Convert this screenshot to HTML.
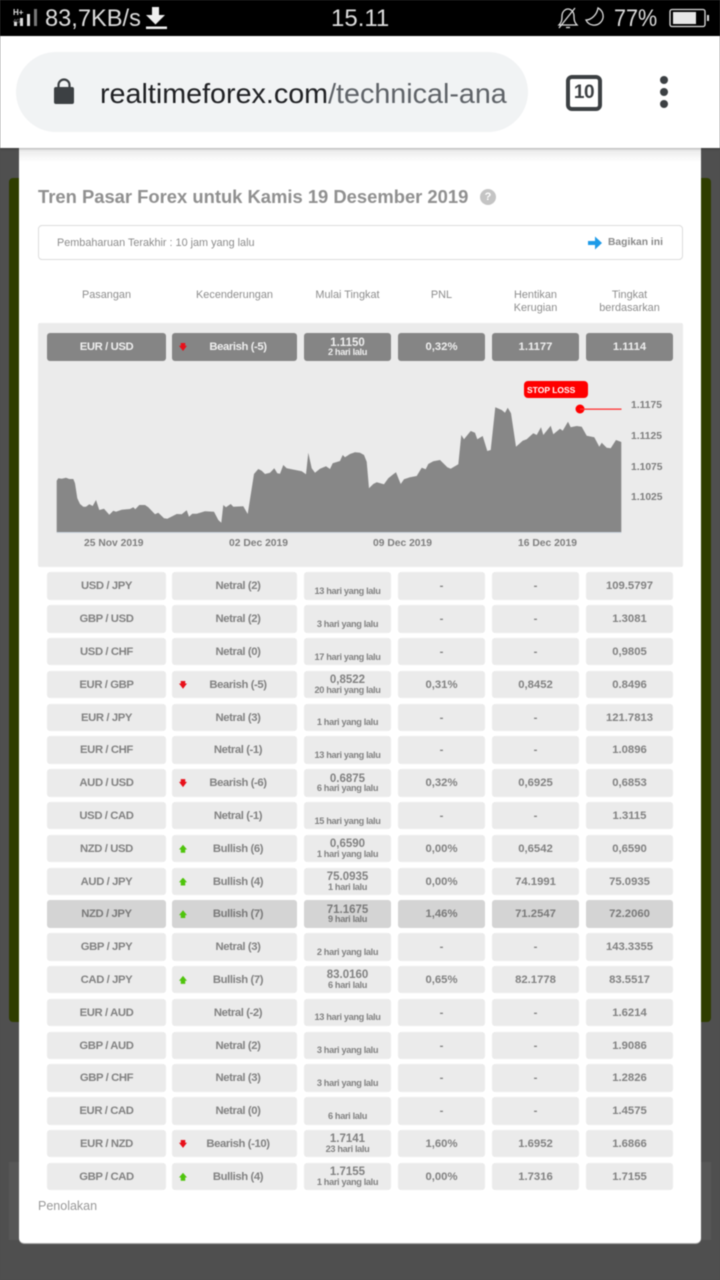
<!DOCTYPE html>
<html><head><meta charset="utf-8"><style>
html,body{margin:0;padding:0}
body{width:720px;height:1280px;position:relative;overflow:hidden;background:#4f4f4f;font-family:"Liberation Sans",sans-serif}
.a{position:absolute}
.t{position:absolute;white-space:nowrap}
#page{position:absolute;left:0;top:0;width:720px;height:1280px;filter:blur(.4px)}
.r{position:absolute;left:0;width:720px;height:28px}
.r>div{position:absolute;top:0;height:27.6px;line-height:29.800px;background:#ebebeb;border-radius:3px;text-align:center;color:#828282;font-size:11.3px;font-weight:bold;white-space:nowrap;overflow:hidden}
.r>div:nth-child(1){left:47px;width:119px;letter-spacing:-.4px}
.r>div:nth-child(2){left:172px;width:118px;padding-left:7px;letter-spacing:-.4px}
.r>div:nth-child(3){left:304px;width:87px}
.r>div:nth-child(4){left:398px;width:87px}
.r>div:nth-child(5){left:492px;width:87px}
.r>div:nth-child(6){left:586px;width:87px}
.r b{position:absolute;left:0;right:0;top:4.500px;line-height:11px;font-size:11.5px;font-weight:bold}
.r i{position:absolute;left:0;right:0;top:14px;line-height:10px;font-size:9.2px;font-style:normal;font-weight:bold;letter-spacing:-.35px}
.r u{position:absolute;left:0;right:0;top:12.800px;line-height:12px;font-size:9.2px;text-decoration:none;letter-spacing:-.35px}
.h>div{background:#858585;color:#eee}
.g>div{background:#d4d4d4;color:#7a7a7a}
.dn,.up{position:absolute;left:7px;top:10px;width:8px;height:8px}
.dn{background:#e8101a;clip-path:polygon(22% 0,78% 0,78% 35%,100% 35%,50% 100%,0 35%,22% 35%)}
.up{background:#4fc40c;clip-path:polygon(50% 0,100% 60%,78% 60%,78% 100%,22% 100%,22% 60%,0 60%)}
.hd{position:absolute;text-align:center;color:#8e8e8e;font-size:10.900px;line-height:13px;top:288.500px}
.ax{position:absolute;color:#7f7f7f;font-size:10.3px;font-weight:bold;white-space:nowrap;line-height:12px}
</style></head><body><div id="page">

<div class="a" style="left:0;top:36px;width:720px;height:1244px;background:#4f4f4f"></div>
<div class="a" style="left:9px;top:178px;width:702px;height:844px;background:#2f3d00;border-radius:4px"></div>
<div class="a" style="left:9px;top:1162px;width:702px;height:78px;background:#575757"></div>
<div class="a" style="left:19px;top:148px;width:682px;height:1095px;background:#fff;border-radius:0 0 5px 5px;box-shadow:0 1px 0 #aaa"></div>
<div class="a" style="left:19px;top:148px;width:682px;height:14px;background:linear-gradient(#e8e8e8,#fff)"></div>

<div class="a" style="left:0;top:0;width:720px;height:36px;background:#000"></div>
<svg class="a" style="left:0;top:0" width="180" height="36" viewBox="0 0 180 36">
<text x="13" y="15" font-size="8" font-weight="bold" fill="#ddd" font-family="Liberation Sans">H+</text>
<text x="13" y="23" font-size="5.5" fill="#888" font-family="Liberation Sans">4G</text>
<rect x="14" y="22" width="3" height="4" fill="#ddd"/><rect x="20" y="18" width="3" height="8" fill="#ddd"/><rect x="27" y="14" width="3" height="12" fill="#ddd"/><rect x="34" y="9" width="3" height="17" fill="#777"/>
<path d="M152 7h7v8h6l-9.500 9.500L146 15h6z" fill="#eee"/><rect x="146" y="26.500" width="21" height="2.500" fill="#eee"/>
</svg>
<div class="t" style="left:45px;top:4px;font-size:24px;line-height:30px;color:#dcdcdc;transform-origin:0 0;transform:scaleX(.985)">83,7KB/s</div>
<div class="t" style="left:331px;top:4px;font-size:24px;line-height:30px;color:#dcdcdc">15.11</div>
<div class="t" style="left:614px;top:4px;font-size:24px;line-height:30px;color:#dcdcdc;transform-origin:0 0;transform:scaleX(.9)">77%</div>
<svg class="a" style="left:540px;top:0" width="180" height="36" viewBox="0 0 180 36" fill="none" stroke="#ddd" stroke-width="1.300">
<path d="M19 25c3-3 3-6 3-9 0-4 3-7 6-7s6 3 6 7c0 3 0 6 3 9z"/><path d="M19 28L35 8"/><path d="M26 27.500h4"/>
<path d="M58 8a9 9 0 1 1-12 12c5 0 11-5 12-12z"/>
<rect x="130" y="9.500" width="35" height="17" rx="2"/><rect x="133" y="12" width="23" height="12" fill="#e6e6e6" stroke="none"/><rect x="167" y="15" width="2" height="6" fill="#ddd" stroke="none"/>
</svg>

<div class="a" style="left:0;top:36px;width:720px;height:112px;background:#fff;box-shadow:0 1px 2px rgba(0,0,0,.25)"></div>
<div class="a" style="left:16px;top:52px;width:512px;height:80px;background:#f1f3f4;border-radius:40px"></div>
<svg class="a" style="left:50px;top:76px" width="28" height="32" viewBox="0 0 28 32"><path d="M6 11h16a2 2 0 0 1 2 2v13a2 2 0 0 1-2 2H6a2 2 0 0 1-2-2V13a2 2 0 0 1 2-2z" fill="#3c4043"/><path d="M8.500 12V9a5.500 5.500 0 0 1 11 0v3" fill="none" stroke="#3c4043" stroke-width="2.200"/></svg>
<div class="t" style="left:100px;top:75px;font-size:28px;line-height:38px;color:#202124;transform-origin:0 0;transform:scaleX(1.025)">realtimeforex.com<span style="color:#5f6368">/technical-ana</span></div>
<div class="a" style="left:566px;top:75px;width:28px;height:28px;border:4px solid #3c4043;border-radius:6px;text-align:center;line-height:28px;font-size:19px;font-weight:bold;color:#3c4043;letter-spacing:-.5px">10</div>
<div class="a" style="left:660px;top:76px;width:8px;height:8px;border-radius:50%;background:#3c4043"></div>
<div class="a" style="left:660px;top:88px;width:8px;height:8px;border-radius:50%;background:#3c4043"></div>
<div class="a" style="left:660px;top:100px;width:8px;height:8px;border-radius:50%;background:#3c4043"></div>

<div class="t" style="left:38px;top:184px;font-size:18.400px;line-height:25px;font-weight:bold;color:#909090">Tren Pasar Forex untuk Kamis 19 Desember 2019</div>
<div class="a" style="left:480px;top:189px;width:16px;height:16px;border-radius:50%;background:#c4c4c4;color:#fff;font-size:11px;font-weight:bold;line-height:16px;text-align:center">?</div>

<div class="a" style="left:38px;top:225px;width:643px;height:33px;border:1px solid #dcdcdc;border-radius:4px;background:#fff"></div>
<div class="t" style="left:57px;top:235.500px;font-size:10.850px;line-height:14px;color:#8c8c8c">Pembaharuan Terakhir : 10 jam yang lalu</div>
<svg class="a" style="left:587px;top:235px" width="16" height="16" viewBox="0 0 16 16"><path d="M1 6h7V1.500L15 8l-7 6.500V10H1z" fill="#1e9be8"/></svg>
<div class="t" style="left:608px;top:235.500px;font-size:10.300px;line-height:14px;font-weight:bold;color:#8a8a8a">Bagikan ini</div>

<div class="hd" style="left:47px;width:119px">Pasangan</div>
<div class="hd" style="left:172px;width:125px">Kecenderungan</div>
<div class="hd" style="left:304px;width:87px">Mulai Tingkat</div>
<div class="hd" style="left:398px;width:87px">PNL</div>
<div class="hd" style="left:492px;width:87px">Hentikan<br>Kerugian</div>
<div class="hd" style="left:586px;width:87px">Tingkat<br>berdasarkan</div>

<div class="a" style="left:38px;top:323px;width:645px;height:244px;background:#ebebeb;border-radius:2px"></div>

<div class="r h" style="top:333px"><div>EUR / USD</div><div><span class="dn"></span>Bearish (-5)</div><div><b>1.1150</b><i>2 hari lalu</i></div><div>0,32%</div><div>1.1177</div><div>1.1114</div></div>

<svg class="a" style="left:0;top:0" width="720" height="580" viewBox="0 0 720 580">
<path fill="#878787" d="M56.700 532.300V480.700L58.300 478.300 61.700 478.700 66 477.700 69.300 479 73.300 479 75 483.300 77.300 498.300 80 504 83.300 506.700 86 506.700 89.300 504.300 92.700 506 96 500 99.300 510 104 508.700 109.300 514.700 113.300 510.700 116 511.700 121.700 509.700 130 509 133.300 507.300 135.300 509.300 139.300 505 145 505 148.300 507.300 155 514.300 158.300 512.700 164 518.300 167.300 518.700 173.300 515.700 176.700 514 181.700 514.300 186.700 510.300 189 516.700 192.300 513.700 196.700 513.700 205 511.300 214 511.700 218.300 520 221.300 522.700 223.300 505 226 507.300 230.700 504 233.300 506.700 243.300 506.300 247.700 514 254 474 258.300 469 261.700 470.700 265 474 270 472.700 274.300 468.300 277.300 473.300 280 473.700 283.300 465 286.700 468.300 296.700 470.300 301.700 471.300 306 474.300 308.300 452.700 311.700 468.300 315 472.700 320 468.700 326 466.300 330 469 332.700 463.300 340 461 342.700 455 345 457.300 350 454 355 452.300 360 452.700 364 455 366.700 461.700 369 488.300 373.300 484 376.700 482.300 384 484.300 388.300 478.300 393.300 474.300 396 472.300 400.700 484 404 479.300 410 477.300 416.700 476 421.700 467.700 425.700 469.300 428.300 464 433.300 461.300 440 460 447.300 467.300 450.700 468.700 458.300 464.300 461.300 435 464 439.300 470.700 431 475 432.700 477.300 439.300 482.700 436 487.300 451 490.700 450 495.300 407.300 501.700 410 505 412.700 507.700 407.700 511 413.300 516 446.700 522.700 440.700 526.700 439.300 533.300 433.300 536.700 435 541 427.300 543.300 435 550.700 425.700 553.300 434.300 560 428.700 562.700 430.700 568 421.700 570.700 427.300 576.700 426 581.700 426.700 586.700 435.700 594.300 437.300 599.300 446.700 601.700 442.700 606.700 447.700 610.700 448.300 616 440 621.300 442 621.300 532.300Z"/>
<rect x="56.700" y="532" width="564.600" height="1" fill="#c9d3dc"/>
<circle cx="580" cy="409" r="4.500" fill="#f00"/><rect x="580" y="408.500" width="41.500" height="1.300" fill="#f33"/>
</svg>
<div class="a" style="left:524px;top:381px;width:64px;height:17px;background:#f00;border-radius:4px"></div>
<div class="t" style="left:527px;top:384.500px;font-size:8.500px;line-height:11px;font-weight:bold;color:#fff">STOP LOSS</div>
<div class="ax" style="left:631px;top:400px">1.1175</div>
<div class="ax" style="left:631px;top:431px">1.1125</div>
<div class="ax" style="left:631px;top:462px">1.1075</div>
<div class="ax" style="left:631px;top:492px">1.1025</div>
<div class="ax" style="left:84px;top:538px">25 Nov 2019</div>
<div class="ax" style="left:229px;top:538px">02 Dec 2019</div>
<div class="ax" style="left:373px;top:538px">09 Dec 2019</div>
<div class="ax" style="left:518px;top:538px">16 Dec 2019</div>

<div class="r" style="top:572.300px"><div>USD / JPY</div><div>Netral (2)</div><div><u>13 hari yang lalu</u></div><div>-</div><div>-</div><div>109.5797</div></div>
<div class="r" style="top:605.100px"><div>GBP / USD</div><div>Netral (2)</div><div><u>3 hari yang lalu</u></div><div>-</div><div>-</div><div>1.3081</div></div>
<div class="r" style="top:637.900px"><div>USD / CHF</div><div>Netral (0)</div><div><u>17 hari yang lalu</u></div><div>-</div><div>-</div><div>0,9805</div></div>
<div class="r" style="top:670.700px"><div>EUR / GBP</div><div><span class="dn"></span>Bearish (-5)</div><div><b>0,8522</b><i>20 hari yang lalu</i></div><div>0,31%</div><div>0,8452</div><div>0.8496</div></div>
<div class="r" style="top:703.500px"><div>EUR / JPY</div><div>Netral (3)</div><div><u>1 hari yang lalu</u></div><div>-</div><div>-</div><div>121.7813</div></div>
<div class="r" style="top:736.300px"><div>EUR / CHF</div><div>Netral (-1)</div><div><u>13 hari yang lalu</u></div><div>-</div><div>-</div><div>1.0896</div></div>
<div class="r" style="top:769.100px"><div>AUD / USD</div><div><span class="dn"></span>Bearish (-6)</div><div><b>0.6875</b><i>6 hari yang lalu</i></div><div>0,32%</div><div>0,6925</div><div>0,6853</div></div>
<div class="r" style="top:801.900px"><div>USD / CAD</div><div>Netral (-1)</div><div><u>15 hari yang lalu</u></div><div>-</div><div>-</div><div>1.3115</div></div>
<div class="r" style="top:834.700px"><div>NZD / USD</div><div><span class="up"></span>Bullish (6)</div><div><b>0,6590</b><i>1 hari yang lalu</i></div><div>0,00%</div><div>0,6542</div><div>0,6590</div></div>
<div class="r" style="top:867.500px"><div>AUD / JPY</div><div><span class="up"></span>Bullish (4)</div><div><b>75.0935</b><i>1 hari lalu</i></div><div>0,00%</div><div>74.1991</div><div>75.0935</div></div>
<div class="r g" style="top:900.300px"><div>NZD / JPY</div><div><span class="up"></span>Bullish (7)</div><div><b>71.1675</b><i>9 hari lalu</i></div><div>1,46%</div><div>71.2547</div><div>72.2060</div></div>
<div class="r" style="top:933.100px"><div>GBP / JPY</div><div>Netral (3)</div><div><u>2 hari yang lalu</u></div><div>-</div><div>-</div><div>143.3355</div></div>
<div class="r" style="top:965.900px"><div>CAD / JPY</div><div><span class="up"></span>Bullish (7)</div><div><b>83.0160</b><i>6 hari lalu</i></div><div>0,65%</div><div>82.1778</div><div>83.5517</div></div>
<div class="r" style="top:998.700px"><div>EUR / AUD</div><div>Netral (-2)</div><div><u>13 hari yang lalu</u></div><div>-</div><div>-</div><div>1.6214</div></div>
<div class="r" style="top:1031.500px"><div>GBP / AUD</div><div>Netral (2)</div><div><u>3 hari yang lalu</u></div><div>-</div><div>-</div><div>1.9086</div></div>
<div class="r" style="top:1064.300px"><div>GBP / CHF</div><div>Netral (3)</div><div><u>3 hari yang lalu</u></div><div>-</div><div>-</div><div>1.2826</div></div>
<div class="r" style="top:1097.100px"><div>EUR / CAD</div><div>Netral (0)</div><div><u>6 hari lalu</u></div><div>-</div><div>-</div><div>1.4575</div></div>
<div class="r" style="top:1129.900px"><div>EUR / NZD</div><div><span class="dn"></span>Bearish (-10)</div><div><b>1.7141</b><i>23 hari lalu</i></div><div>1,60%</div><div>1.6952</div><div>1.6866</div></div>
<div class="r" style="top:1162.700px"><div>GBP / CAD</div><div><span class="up"></span>Bullish (4)</div><div><b>1.7155</b><i>1 hari yang lalu</i></div><div>0,00%</div><div>1.7316</div><div>1.7155</div></div>

<div class="t" style="left:38px;top:1198px;font-size:12.500px;line-height:16px;color:#999">Penolakan</div>
</div></body></html>
